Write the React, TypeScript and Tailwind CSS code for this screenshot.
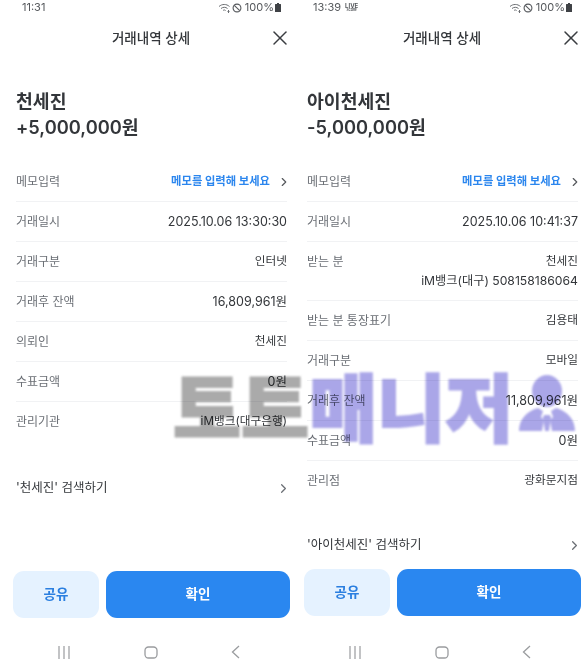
import { ChevronRight, X } from "lucide-react";

type Row = { label: string; value: string; sub?: string; blue?: boolean; narrow?: boolean };

const leftRows: Row[] = [
  { label: "메모입력", value: "메모를 입력해 보세요", blue: true },
  { label: "거래일시", value: "2025.10.06 13:30:30" },
  { label: "거래구분", value: "인터넷", narrow: true },
  { label: "거래후 잔액", value: "16,809,961원" },
  { label: "의뢰인", value: "천세진", narrow: true },
  { label: "수표금액", value: "0원" },
  { label: "관리기관", value: "iM뱅크(대구은행)", narrow: true },
];

const rightRows: Row[] = [
  { label: "메모입력", value: "메모를 입력해 보세요", blue: true },
  { label: "거래일시", value: "2025.10.06 10:41:37" },
  { label: "받는 분", value: "천세진", sub: "iM뱅크(대구) 508158186064", narrow: true },
  { label: "받는 분 통장표기", value: "김용태", narrow: true },
  { label: "거래구분", value: "모바일", narrow: true },
  { label: "거래후 잔액", value: "11,809,961원" },
  { label: "수표금액", value: "0원" },
  { label: "관리점", value: "광화문지점", narrow: true },
];

const StatusIcons = () => (
  <div className="flex items-center gap-[1px] text-[11px] text-[#55585c]">
    <svg width="13" height="10" viewBox="0 0 13 10" fill="none" stroke="#6b6e72" strokeWidth="1">
      <path d="M1 3.500C4 .8 8.500.8 11.500 3.500M3 5.500c2-1.600 4.600-1.600 6.500 0M5 7.500c1-.7 1.700-.7 2.600 0" />
      <path d="M10.500 7v3M9.500 8.500h2" />
    </svg>
    <svg width="10" height="10" viewBox="0 0 11 11" fill="none" stroke="#55585c" strokeWidth="1.200">
      <circle cx="5.500" cy="5.500" r="4.300" />
      <path d="M2.500 2.500l6 6" />
    </svg>
    <span className="ml-[2px]">100%</span>
    <svg width="6" height="9" viewBox="0 0 6 9" fill="#3f4246">
      <path d="M2 0h2v1h1.500a.5.500 0 0 1 .5.500V9H0V1.500A.5.500 0 0 1 .5 1H2z" />
    </svg>
  </div>
);

const DetailRow = ({ row }: { row: Row }) => (
  <div className="flex justify-between border-b border-[#f1f2f4] py-[11px] text-[12.5px] leading-[17px] last:border-b-0">
    <span className="text-[12px] text-[#6b6f75]">{row.label}</span>
    {row.blue ? (
      <span className="-mr-[4px] flex items-center gap-[7px] text-[11.3px] font-bold text-[#2b86ee]">
        {row.value}
        <ChevronRight size={14} className="text-[#55585c]" />
      </span>
    ) : (
      <div className="text-right text-[#33363a]">
        <div className={row.narrow ? "text-[11.7px]" : ""}>{row.value}</div>
        {row.sub && <div className="mt-[2px] text-[12.2px]">{row.sub}</div>}
      </div>
    )}
  </div>
);

const Phone = ({
  time,
  live,
  name,
  amount,
  rows,
  search,
  searchGap,
  bottomGap,
}: {
  time: string;
  live?: boolean;
  name: string;
  amount: string;
  rows: Row[];
  search: string;
  searchGap: string;
  bottomGap: string;
}) => (
  <div className="flex h-full w-[291px] shrink-0 flex-col bg-white">
    <div className="flex h-[15px] items-center justify-between pl-[22px] pr-[10px] text-[11px] text-[#55585c]">
      <div className="flex items-center gap-[4px]">
        {time}
        {live && (
          <span className="flex flex-col items-center text-[6px] font-bold leading-[6px] text-[#55585c]">
            <span>LIVE</span>
            <span className="text-[3px] leading-[3px]">SCORE</span>
          </span>
        )}
      </div>
      <StatusIcons />
    </div>
    <div className="relative mt-[11px] h-[24px] pl-[11px] text-center text-[13.5px] font-medium leading-[24px] text-[#33363a]">
      거래내역 상세
      <X size={24} strokeWidth={1.500} className="absolute -right-[1px] top-0 text-[#3a3d41]" />
    </div>
    <div className="mt-[38px] pl-[16px] text-[18.3px] font-semibold leading-[26px] text-[#33363a]">
      <div>{name}</div>
      <div>{amount}</div>
    </div>
    <div className="mt-[22px] pl-[16px] pr-[4px]">
      {rows.map((row) => (
        <DetailRow key={row.label} row={row} />
      ))}
    </div>
    <div className={`${searchGap} flex items-center justify-between pl-[16px] text-[12.5px] leading-[18px] text-[#33363a]`}>
      {search}
      <ChevronRight size={15} className="text-[#6b6f75]" />
    </div>
    <div className={`${bottomGap} flex gap-[7px] pl-[13px] pr-[1px]`}>
      <button className="h-[47px] w-[86px] rounded-[11px] bg-[#e5f2ff] text-[13.5px] font-bold text-[#2b7fe0]">공유</button>
      <button className="h-[47px] flex-1 rounded-[11px] bg-[#2a87f0] text-[13.5px] font-bold text-white">확인</button>
    </div>
    <div className="mt-auto flex items-center justify-center gap-[73px] pb-[6px] pl-[5px]">
      <svg width="14" height="13" viewBox="0 0 14 13" fill="none" stroke="#9a9c9f" strokeWidth="1.200">
        <path d="M2 0v13M7 0v13M12 0v13" />
      </svg>
      <svg width="14" height="13" viewBox="0 0 14 13" fill="none" stroke="#9a9c9f" strokeWidth="1.300">
        <rect x="1" y="1" width="12" height="11" rx="3.500" />
      </svg>
      <svg width="9" height="14" viewBox="0 0 9 14" fill="none" stroke="#9a9c9f" strokeWidth="1.300">
        <path d="M8 1L1.500 7 8 13" />
      </svg>
    </div>
  </div>
);

export default function App() {
  return (
    <div className="relative flex h-[665px] w-[582px] overflow-hidden bg-white [font-family:Inter,'Noto_Sans_CJK_KR',sans-serif]">
      <Phone
        time="11:31"
        name="천세진"
        amount="+5,000,000원"
        rows={leftRows}
        search="'천세진' 검색하기"
        searchGap="mt-[38px]"
        bottomGap="mt-[74px]"
      />
      <Phone
        time="13:39"
        live
        name="아이천세진"
        amount="-5,000,000원"
        rows={rightRows}
        search="'아이천세진' 검색하기"
        searchGap="mt-[36px]"
        bottomGap="mt-[15px]"
      />
      {/* watermark */}
      <div className="pointer-events-none absolute left-[173px] top-[372px] flex items-center whitespace-nowrap text-[74px] font-black leading-[74px] opacity-70 mix-blend-multiply blur-[1.200px]">
        <span className="text-[#868686] [-webkit-text-stroke:2px_#868686]">토토</span>
        <span className="text-[#8680de] [-webkit-text-stroke:2px_#8680de]">매니저</span>
        <svg width="56" height="60" viewBox="0 0 56 60" className="ml-[6px] mb-[8px]" fill="#8680de">
          <ellipse cx="28" cy="16" rx="15" ry="16" />
          <path d="M0 56c0-12 8-20 19-23l5 3-2 6 3 3-2 11zM56 56c0-12-8-20-19-23l-5 3 2 6-3 3 2 11z" />
          <path d="M25 40h6l1 3-2 13h-4l-2-13z" />
        </svg>
      </div>
    </div>
  );
}
